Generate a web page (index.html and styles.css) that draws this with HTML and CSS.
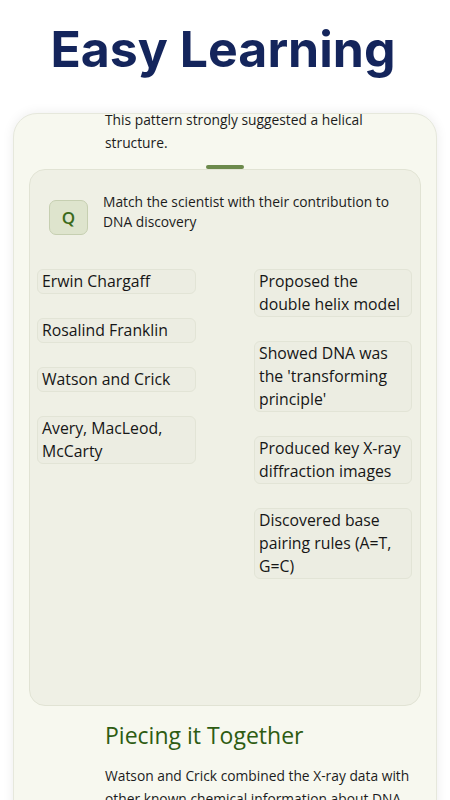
FILE: index.html
```html
<!DOCTYPE html>
<html>
<head>
<meta charset="utf-8">
<link rel="stylesheet" href="styles.css">
</head>
<body>
<header class="hero">
  <h1 class="hero-title">Easy Learning</h1>
</header>
<main class="card">
  <p class="lead-text">This pattern strongly suggested a helical structure.</p>
  <div class="handle"></div>
  <section class="quiz">
    <div class="quiz-head">
      <div class="q-badge">Q</div>
      <p class="q-text">Match the scientist with their contribution to DNA discovery</p>
    </div>
    <div class="match">
      <div class="col col-left">
        <div class="chip">Erwin Chargaff</div>
        <div class="chip">Rosalind Franklin</div>
        <div class="chip">Watson and Crick</div>
        <div class="chip">Avery, MacLeod, McCarty</div>
      </div>
      <div class="col col-right">
        <div class="chip">Proposed the double helix model</div>
        <div class="chip">Showed DNA was the 'transforming principle'</div>
        <div class="chip">Produced key X-ray diffraction images</div>
        <div class="chip">Discovered base pairing rules (A=T, G=C)</div>
      </div>
    </div>
  </section>
  <h2 class="section-title">Piecing it Together</h2>
  <p class="body-text">Watson and Crick combined the X-ray data with other known chemical information about DNA.</p>
</main>
</body>
</html>
```

FILE: styles.css
```css
html, body {
  margin: 0;
  padding: 0;
  background: #ffffff;
  height: 800px;
  overflow: hidden;
}
body {
  font-family: "Open Sans", "Noto Sans", sans-serif;
  color: #1c1c1c;
}
.hero {
  height: 113px;
  display: flex;
  justify-content: center;
}
.hero-title {
  margin: 19px 0 0 -4px;
  font-family: "Inter", sans-serif;
  font-weight: 700;
  font-size: 50px;
  line-height: 60px;
  color: #14255c;
  letter-spacing: 0;
}
.card {
  margin: 0 13px;
  height: 700px;
  background: #f7f8ef;
  border: 1px solid #e6e8dc;
  border-radius: 24px 24px 0 0;
  box-shadow: 0 0 12px rgba(0,0,0,0.08);
  overflow: hidden;
  padding: 0 15px;
  box-sizing: border-box;
}
.lead-text {
  margin: -6px 0 0 76px;
  font-size: 13.8px;
  line-height: 23px;
  font-weight: 500;
  width: 285px;
}
.handle {
  width: 38px;
  height: 4px;
  background: #6c8a4c;
  border-radius: 2px;
  margin: 11px auto 0;
}
.quiz {
  margin-top: 0;
  height: 537px;
  box-sizing: border-box;
  background: #eff0e5;
  border: 1px solid #e1e3d4;
  border-radius: 16px;
  padding: 22px 8px 0 7px;
}
.quiz-head {
  display: flex;
  align-items: flex-start;
  gap: 15px;
  padding-left: 12px;
}
.q-badge {
  margin-top: 8px;
  width: 39px;
  height: 35px;
  box-sizing: border-box;
  flex: none;
  border: 1px solid #c6cfb1;
  background: #dee4cd;
  border-radius: 7px;
  display: flex;
  align-items: center;
  justify-content: center;
  color: #3b6a1b;
  font-size: 17px;
  font-weight: 600;
}
.q-text {
  margin: 0;
  font-size: 13.8px;
  line-height: 20px;
  font-weight: 500;
  width: 296px;
}
.match {
  display: grid;
  grid-template-columns: 159px 158px;
  column-gap: 58px;
  margin-top: 34px;
}
.col {
  display: flex;
  flex-direction: column;
  gap: 24px;
  align-items: stretch;
}
.chip {
  background: #ecede2;
  border: 1px solid #e2e4d6;
  border-radius: 6px;
  padding: 0 6px 0 4px;
  font-size: 15.8px;
  line-height: 23px;
  font-weight: 500;
  color: #161616;
}
.section-title {
  margin: 14px 0 0 76px;
  font-size: 23px;
  line-height: 30px;
  font-weight: 400;
  color: #2e5c12;
}
.body-text {
  margin: 14px 0 0 76px;
  font-size: 13.8px;
  line-height: 23px;
  font-weight: 500;
  width: 316px;
}
```
